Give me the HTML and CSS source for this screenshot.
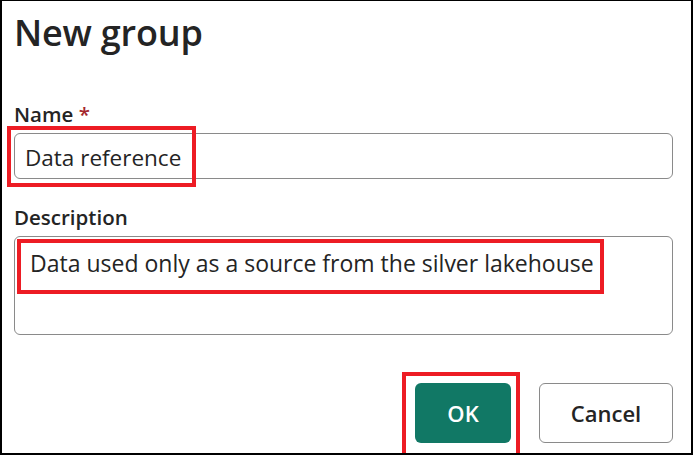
FILE: index.html
```html
<!DOCTYPE html>
<html lang="en">
<head>
<meta charset="utf-8">
<title>New group</title>
<link rel="stylesheet" href="styles.css">
</head>
<body>
<div class="dialog">
  <h1 class="title">New group</h1>
  <div class="field field-name">
    <div class="label">Name <span class="req">*</span></div>
    <div class="input">
      <span class="value">Data reference</span>
      <span class="mark mark-name"></span>
    </div>
  </div>
  <div class="field field-desc">
    <div class="label">Description</div>
    <div class="textarea">
      <span class="value">Data used only as a source from the silver lakehouse</span>
      <span class="mark mark-desc"></span>
    </div>
  </div>
  <div class="actions">
    <button class="btn btn-primary">OK<span class="mark mark-ok"></span></button>
    <button class="btn btn-secondary">Cancel</button>
  </div>
</div>
</body>
</html>
```

FILE: styles.css
```css
* { box-sizing: border-box; }
html, body { margin: 0; padding: 0; background: #fff; }
body {
  font-family: "Open Sans", "Noto Sans", sans-serif;
  color: #242424;
}
.dialog {
  width: 693px;
  height: 455px;
  border-top: 1px solid #000;
  border-left: 2px solid #000;
  border-right: 2px solid #000;
  border-bottom: 2px solid #000;
  padding: 8px 18px 0 12px;
  display: flex;
  flex-direction: column;
  overflow: hidden;
}
.title {
  margin: 0;
  font-size: 36px;
  line-height: 48px;
  font-weight: 600;
  letter-spacing: -0.2px;
}
.field { display: flex; flex-direction: column; }
.field-name { margin-top: 44px; }
.field-desc { margin-top: 25px; }
.label {
  font-size: 20.5px;
  line-height: 26px;
  font-weight: 600;
  margin-bottom: 6px;
}
.req { color: #a4262c; }
.input, .textarea {
  position: relative;
  border: 1px solid #8a8a8a;
  border-radius: 6px;
  background: #fff;
  font-size: 22.5px;
}
.input {
  height: 46px;
  padding: 2px 10px 0;
  display: flex;
  align-items: center;
}
.textarea {
  height: 99px;
  padding: 12px 15px;
  line-height: 28px;
  font-size: 23px;
}
.mark {
  position: absolute;
  border: 4px solid #ed1c24;
  pointer-events: none;
}
.mark-name { left: -8px; top: -8px; width: 189px; height: 61px; }
.mark-desc { left: 2px; top: 2px; width: 587px; height: 55px; }
.actions {
  margin-top: 48px;
  display: flex;
  justify-content: flex-end;
  gap: 28px;
}
.btn {
  position: relative;
  height: 60px;
  border-radius: 6px;
  font-family: inherit;
  font-size: 22px;
  font-weight: 600;
  cursor: pointer;
}
.btn-primary {
  width: 96px;
  background: #117865;
  color: #fff;
  border: none;
}
.btn-secondary {
  width: 134px;
  background: #fff;
  color: #242424;
  border: 1px solid #8a8a8a;
}
.mark-ok { left: -13px; top: -11px; width: 118px; height: 100px; }
```
